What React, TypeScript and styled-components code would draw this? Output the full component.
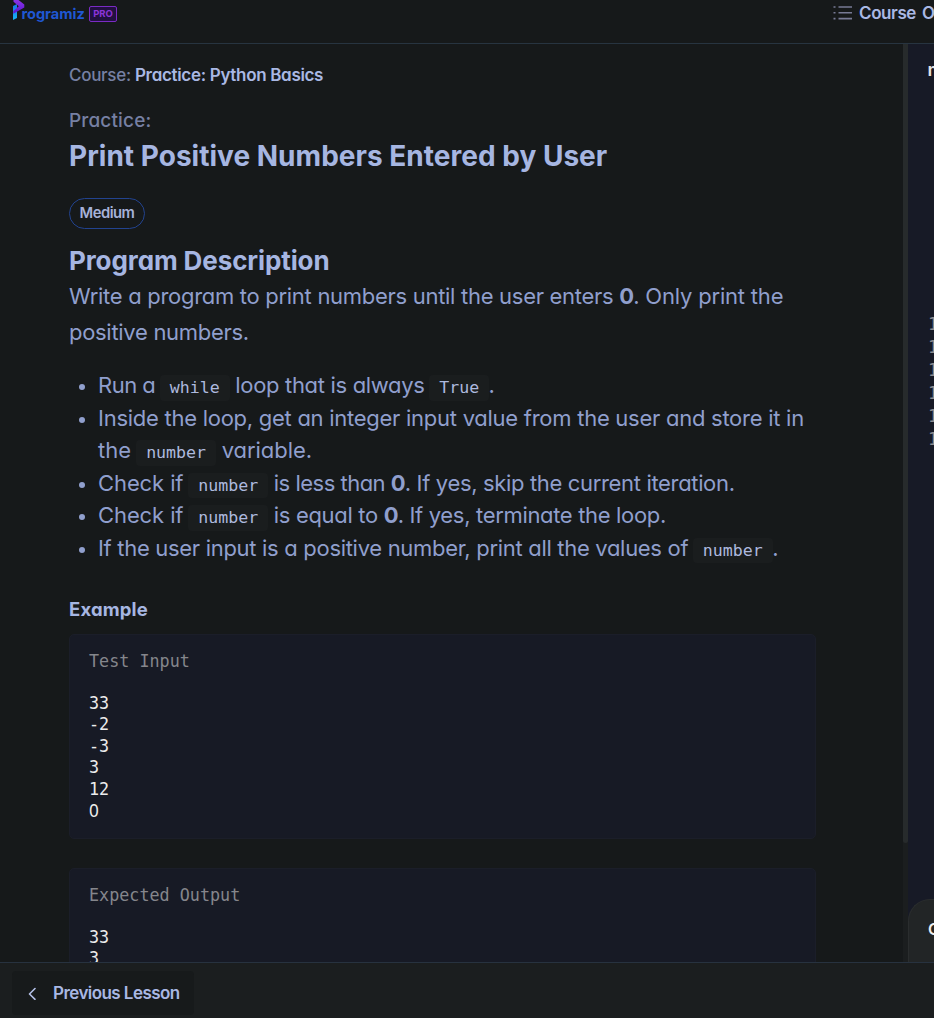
import React from 'react';
import styled, { createGlobalStyle } from 'styled-components';

const sans = `Inter, "Liberation Sans", sans-serif`;
const mono = `"DejaVu Sans Mono", "Liberation Mono", monospace`;

const GlobalStyle = createGlobalStyle`
  * { box-sizing: border-box; }
  body {
    margin: 0;
    background: #16191a;
    font-family: ${sans};
    font-feature-settings: "cv11" 1;
    overflow: hidden;
  }
`;

const Page = styled.div`
  display: grid;
  grid-template-rows: 44px 918px 56px;
  width: 100%;
  height: 1018px;
  overflow: hidden;
`;

const Header = styled.header`
  display: flex;
  justify-content: space-between;
  padding-left: 11.5px;
  border-bottom: 1px solid #273440;
  overflow: hidden;
`;

const Brand = styled.div`
  display: flex;
  height: 28px;
`;

const BrandName = styled.span`
  margin-left: -4px;
  width: 64px;
  color: #1f57d2;
  font-size: 14.6px;
  font-weight: 700;
  line-height: 29px;
  letter-spacing: -0.05px;
  font-feature-settings: normal;
`;

const ProTag = styled.span`
  margin: 6px 0 0 3.5px;
  width: 28px;
  height: 16px;
  border: 1.5px solid #7a2bc4;
  border-radius: 2px;
  background: #221040;
  color: #8b34d8;
  font-size: 9.5px;
  font-weight: 700;
  line-height: 13px;
  text-align: center;
`;

const OutlineLink = styled.div`
  display: flex;
  gap: 7px;
  width: 101px;
  height: 26px;
  color: #a9b8e4;
  font-size: 17px;
  font-weight: 600;
  line-height: 26px;
  letter-spacing: -0.4px;
  word-spacing: 2px;
  white-space: nowrap;

  svg { flex: none; margin-top: 5px; }
`;

const Main = styled.main`
  display: grid;
  grid-template-columns: 903px 5px 1fr;
  overflow: hidden;
`;

const Lesson = styled.section`
  padding: 16px 87px 0 69px;
  overflow: hidden;
`;

const Track = styled.span<{ $px: number }>`
  letter-spacing: ${p => p.$px}px;
`;

const Zero = styled.b`
  letter-spacing: -0.9px;
`;

const Breadcrumb = styled.div`
  height: 31px;
  color: #7680a3;
  font-size: 17px;
  font-weight: 500;
  line-height: 31px;

  b { color: #a9b8e4; font-weight: 600; }
`;

const Kicker = styled.div`
  margin-top: 15px;
  height: 30px;
  color: #7680a3;
  font-size: 19px;
  line-height: 30px;
  font-weight: 500;
  letter-spacing: 0.15px;
`;

const Title = styled.h1`
  margin: 0;
  height: 40px;
  color: #a6b6e2;
  font-size: 28px;
  line-height: 40px;
  font-weight: 700;
  letter-spacing: 0.02px;
  white-space: nowrap;
`;

const Badge = styled.div`
  margin-top: 22px;
  width: 76px;
  height: 31px;
  border: 1px solid #22438f;
  border-radius: 16px;
  color: #a6b2d8;
  font-size: 14.8px;
  font-weight: 600;
  line-height: 28px;
  letter-spacing: -0.5px;
  text-align: center;
`;

const Heading = styled.h2`
  margin: 14px 0 0;
  height: 35px;
  color: #a6b6e2;
  font-size: 26px;
  line-height: 35px;
  font-weight: 700;
  letter-spacing: -0.1px;
`;

const Paragraph = styled.p`
  margin: 0;
  color: #909fcd;
  font-size: 22px;
  line-height: 36px;
`;

const Tasks = styled.ul`
  margin: 19px 0 0;
  padding: 0;
  list-style: none;
  color: #909fcd;
  font-size: 22px;
  line-height: 32.6px;
`;

const Task = styled.li`
  display: flex;
  padding-left: 10px;

  &::before {
    content: '';
    flex: none;
    width: 6px;
    height: 6px;
    margin: 15px 13px 0 0;
    border-radius: 50%;
    background: #909fcd;
  }
`;

const Code = styled.code`
  margin: 0 -0.6px 0 -1.3px;
  padding: 3px 10px 3.5px;
  border-radius: 4px;
  background: #1a1d1e;
  color: #adb9de;
  font-family: ${mono};
  font-size: 16.6px;
  line-height: 1;
`;

const Subheading = styled.h3`
  margin: 29px 0 10px;
  height: 30px;
  color: #a6b6e2;
  font-size: 18.5px;
  line-height: 30px;
  font-weight: 700;
  letter-spacing: 0.15px;
`;

const Sample = styled.div`
  width: 747px;
  height: 205px;
  margin-bottom: 29px;
  padding: 15px 19px;
  border: 1px solid #1b1e29;
  border-radius: 5px;
  background: #171a25;
  font-family: ${mono};
  font-size: 16.75px;
`;

const SampleLabel = styled.div`
  height: 22px;
  margin-bottom: 21px;
  color: #85868c;
  line-height: 22px;
`;

const SampleLine = styled.div<{ $plainZero?: boolean }>`
  height: 21.6px;
  color: #ececec;
  line-height: 21.6px;
  ${p => p.$plainZero && `font-family: "Noto Sans", sans-serif; font-size: 17.2px; line-height: 20px;`}
`;

const ScrollTrack = styled.div`
  background: #1b1e1f;
`;

const ScrollThumb = styled.div`
  height: 799px;
  border-radius: 0 0 3px 3px;
  background: #272b2c;
`;

const Editor = styled.aside`
  display: flex;
  flex-direction: column;
  background: #171a26;
  overflow: hidden;
  white-space: nowrap;
`;

const FileTab = styled.div`
  height: 52px;
  padding-left: 19.5px;
  color: #e4e4e4;
  font-size: 18px;
  font-weight: 600;
  line-height: 52px;
`;

const LineNumbers = styled.div`
  flex: 1;
  margin-top: 217px;
  padding-left: 20px;
  color: #8b8c90;
  font-family: ${mono};
  font-size: 16.8px;
  line-height: 22.95px;
`;

const Console = styled.div`
  height: 63px;
  padding-left: 19px;
  border: 1px solid #2a2d2e;
  border-width: 1px 0 0 1px;
  border-top-left-radius: 22px;
  background: #222526;
  color: #eeeeee;
  font-size: 16px;
  font-weight: 600;
  line-height: 58px;
`;

const Footer = styled.footer`
  padding: 8px 12px 0;
  border-top: 1px solid #27323f;
  background: #1b1e1f;
`;

const PreviousButton = styled.button`
  display: flex;
  align-items: center;
  gap: 14px;
  width: 182px;
  height: 44px;
  padding: 0 0 0 15px;
  border: 0;
  border-radius: 4px;
  background: #171a1b;
  color: #a9b8e4;
  font-family: inherit;
  font-feature-settings: inherit;
  font-size: 17px;
  font-weight: 600;
  letter-spacing: -0.56px;
  white-space: nowrap;
`;

const LogoMark = () => (
  <svg width="14" height="22" viewBox="0 0 14 22">
    <defs>
      <linearGradient id="stem" x1="0" y1="0" x2="0" y2="1">
        <stop offset="0" stopColor="#1673e6" />
        <stop offset="1" stopColor="#18b4f5" />
      </linearGradient>
      <linearGradient id="fold" x1="0" y1="0" x2="0" y2="1">
        <stop offset="0" stopColor="#8b35e6" />
        <stop offset="1" stopColor="#5a12cf" />
      </linearGradient>
    </defs>
    <path d="M1 6L5 4V18L1 20Z" fill="url(#stem)" />
    <path d="M1.5 0H6.5L12.3 4.6V7.4L1.3 13.8V11L6.8 6.2L1.5 1.8Z" fill="url(#fold)" />
  </svg>
);

const ListIcon = () => (
  <svg width="19" height="16" viewBox="0 0 19 16" stroke="#777a94" strokeWidth="1.6">
    <path d="M0.5 2H2.5M5.5 2H19M0.5 7.8H2.5M5.5 7.8H19M0.5 13.6H2.5M5.5 13.6H19" />
  </svg>
);

const ChevronLeft = () => (
  <svg width="12" height="14" viewBox="0 0 12 14" fill="none" stroke="#b3bfe6" strokeWidth="1.6" strokeLinecap="round" strokeLinejoin="round">
    <path d="M8 2.5L2.5 8L8 13.3" />
  </svg>
);

const testInput = ['33', '-2', '-3', '3', '12', '0'];
const expected = ['33', '3'];

export default function App() {
  return (
    <>
      <GlobalStyle />
      <Page>
        <Header>
          <Brand>
            <LogoMark />
            <BrandName>rogramiz</BrandName>
            <ProTag>PRO</ProTag>
          </Brand>
          <OutlineLink>
            <ListIcon />
            Course Outline
          </OutlineLink>
        </Header>
        <Main>
          <Lesson>
            <Breadcrumb>
              <Track $px={-0.3}>Course: </Track>
              <b><Track $px={-0.32}>Practice: Python Basics</Track></b>
            </Breadcrumb>
            <Kicker>Practice:</Kicker>
            <Title>Print Positive Numbers Entered by User</Title>
            <Badge>Medium</Badge>
            <Heading>Program Description</Heading>
            <Paragraph>
              <Track $px={-0.29}>Write a program to print numbers until the user enters </Track>
              <Zero>0</Zero><Track $px={-0.19}>. Only print the </Track>
              <Track $px={-0.3}>positive numbers.</Track>
            </Paragraph>
            <Tasks>
              <Task>
                <div>
                  <Track $px={-0.5}>Run a </Track><Code>while</Code>{' '}
                  <Track $px={-0.32}>loop that is always </Track><Code>True</Code>.
                </div>
              </Task>
              <Task>
                <div>
                  <Track $px={-0.265}>Inside the loop, get an integer input value from the user and store it in </Track>
                  <Track $px={0.05}>the </Track><Code>number</Code> <Track $px={-0.05}>variable.</Track>
                </div>
              </Task>
              <Task>
                <div>
                  <Track $px={-0.1}>Check if </Track><Code>number</Code>{' '}
                  <Track $px={-0.5}>is less than </Track><Zero>0</Zero>
                  <Track $px={-0.34}>. If yes, skip the current iteration.</Track>
                </div>
              </Task>
              <Task>
                <div>
                  <Track $px={-0.1}>Check if </Track><Code>number</Code>{' '}
                  <Track $px={-0.32}>is equal to </Track><Zero>0</Zero>
                  <Track $px={-0.33}>. If yes, terminate the loop.</Track>
                </div>
              </Task>
              <Task>
                <div>
                  <Track $px={-0.305}>If the user input is a positive number, print all the values of </Track>
                  <Code>number</Code>.
                </div>
              </Task>
            </Tasks>
            <Subheading>Example</Subheading>
            <Sample>
              <SampleLabel>Test Input</SampleLabel>
              {testInput.map((v, i) => <SampleLine key={i} $plainZero={v === '0'}>{v}</SampleLine>)}
            </Sample>
            <Sample>
              <SampleLabel>Expected Output</SampleLabel>
              {expected.map((v, i) => <SampleLine key={i}>{v}</SampleLine>)}
            </Sample>
          </Lesson>
          <ScrollTrack><ScrollThumb /></ScrollTrack>
          <Editor>
            <FileTab>main.py</FileTab>
            <LineNumbers>
              {[10, 11, 12, 13, 14, 15].map(n => <div key={n}>{n}</div>)}
            </LineNumbers>
            <Console>Output</Console>
          </Editor>
        </Main>
        <Footer>
          <PreviousButton>
            <ChevronLeft />
            Previous Lesson
          </PreviousButton>
        </Footer>
      </Page>
    </>
  );
}
